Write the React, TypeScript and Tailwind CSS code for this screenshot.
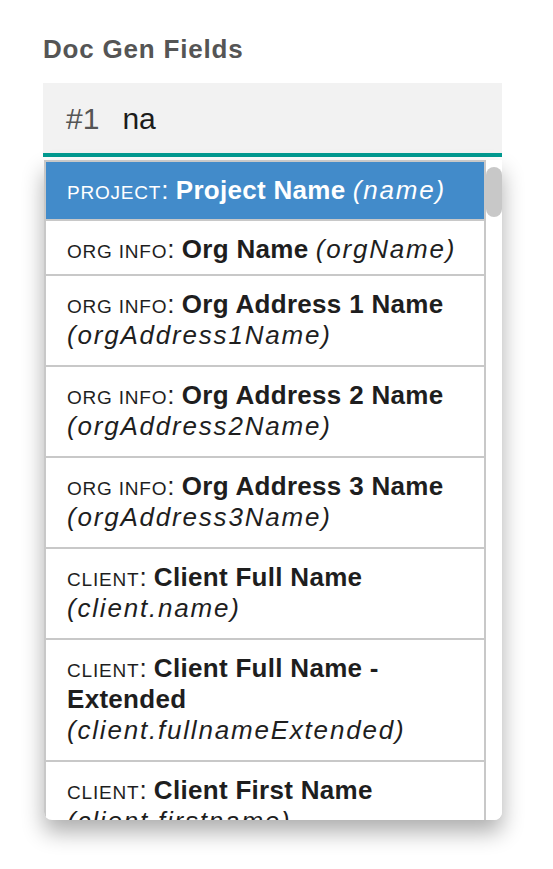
import React from "react";

type Item = { lines: React.ReactNode[]; selected?: boolean; pb?: string };

const Cat = ({ t }: { t: string }) => (
  <>
    <span className="text-[19px] leading-none tracking-[0.8px]">{t}</span>
    <span>:</span>{" "}
  </>
);
const B = ({ t }: { t: string }) => <span className="font-bold tracking-[0.3px]">{t}</span>;
const I = ({ t }: { t: string }) => <span className="italic tracking-[1.8px]">{t}</span>;

const items: Item[] = [
  {
    selected: true,
    pb: "pb-[13px]",
    lines: [
      <>
        <Cat t="PROJECT" />
        <B t="Project Name" /> <I t="(name)" />
      </>,
    ],
  },
  {
    pb: "pb-[9px]",
    lines: [
      <>
        <Cat t="ORG INFO" />
        <B t="Org Name" /> <I t="(orgName)" />
      </>,
    ],
  },
  {
    lines: [
      <>
        <Cat t="ORG INFO" />
        <B t="Org Address 1 Name" />
      </>,
      <I t="(orgAddress1Name)" />,
    ],
  },
  {
    lines: [
      <>
        <Cat t="ORG INFO" />
        <B t="Org Address 2 Name" />
      </>,
      <I t="(orgAddress2Name)" />,
    ],
  },
  {
    lines: [
      <>
        <Cat t="ORG INFO" />
        <B t="Org Address 3 Name" />
      </>,
      <I t="(orgAddress3Name)" />,
    ],
  },
  {
    lines: [
      <>
        <Cat t="CLIENT" />
        <B t="Client Full Name" />
      </>,
      <I t="(client.name)" />,
    ],
  },
  {
    lines: [
      <>
        <Cat t="CLIENT" />
        <B t="Client Full Name -" />
      </>,
      <B t="Extended" />,
      <I t="(client.fullnameExtended)" />,
    ],
  },
  {
    lines: [
      <>
        <Cat t="CLIENT" />
        <B t="Client First Name" />
      </>,
      <I t="(client.firstname)" />,
    ],
  },
];

export default function App() {
  return (
    <div
      className="w-[553px] h-[869px] bg-white overflow-hidden pt-[34px]"
      style={{ fontFamily: '"Liberation Sans", Arial, sans-serif' }}
    >
      <div className="ml-[43px] text-[26px] leading-[30px] font-bold text-[#555555] tracking-[0.8px]">
        Doc Gen Fields
      </div>
      <div className="ml-[43px] mt-[19px] w-[459px] h-[74px] bg-[#f2f2f2] border-b-[4px] border-[#009a90] flex items-center pl-[23px] text-[30px]">
        <span className="text-[#555555]">#1</span>
        <span className="ml-[23px] text-[#1c1c1c]">na</span>
      </div>
      <div className="ml-[44px] mt-[3px] w-[458px] h-[660px] flex bg-white rounded-b-[8px] overflow-hidden shadow-[0_12px_22px_rgba(0,0,0,0.32)]">
        <div className="flex-1 border-l-2 border-t-2 border-r-2 border-[#c8c8c8] overflow-hidden">
          {items.map((it, i) => (
            <div
              key={i}
              className={`pl-[21px] pt-[13px] ${it.pb ?? "pb-[14px]"} border-b-2 border-[#c8c8c8] text-[26px] leading-[31px] whitespace-nowrap ${
                it.selected ? "bg-[#428bca] text-white" : "text-[#1e1e1e]"
              }`}
            >
              {it.lines.map((l, j) => (
                <div key={j}>{l}</div>
              ))}
            </div>
          ))}
        </div>
        <div className="w-[16px] bg-white pt-[7px]">
          <div className="w-[16px] h-[50px] rounded-full bg-[#c8c8c8]" />
        </div>
      </div>
    </div>
  );
}
